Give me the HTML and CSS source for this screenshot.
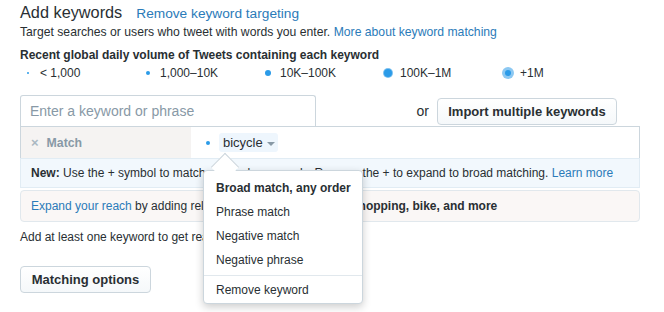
FILE: index.html
```html
<!DOCTYPE html>
<html>
<head>
<meta charset="utf-8">
<link rel="stylesheet" href="styles.css">
</head>
<body>
<div class="page">
  <div class="title-row">
    <h1 class="title">Add keywords</h1>
    <a class="link remove-link">Remove keyword targeting</a>
  </div>
  <p class="desc">Target searches or users who tweet with words you enter. <a class="link">More about keyword matching</a></p>
  <p class="vol-label">Recent global daily volume of Tweets containing each keyword</p>
  <div class="legend">
    <div class="legend-item"><span class="dotbox"><span class="dot d1"></span></span>&lt; 1,000</div>
    <div class="legend-item"><span class="dotbox"><span class="dot d2"></span></span>1,000–10K</div>
    <div class="legend-item"><span class="dotbox"><span class="dot d3"></span></span>10K–100K</div>
    <div class="legend-item"><span class="dotbox"><span class="dot d4"></span></span>100K–1M</div>
    <div class="legend-item"><span class="dotbox"><span class="dot d5"></span></span>+1M</div>
  </div>

  <div class="entry-row">
    <div class="input">Enter a keyword or phrase</div>
    <span class="or">or</span>
    <button class="btn import">Import multiple keywords</button>
  </div>

  <div class="kw-box">
    <div class="match-row">
      <div class="match-label"><span class="x">×</span><span>Match</span></div>
      <div class="match-body">
        <span class="dotbox small"><span class="dot d2"></span></span>
        <span class="chip">bicycle<span class="caret"></span></span>
      </div>
    </div>
    <div class="info"><b>New:</b> Use the + symbol to match exact phrases only. Remove the + to expand to broad matching. <a class="link">Learn more</a></div>

    <div class="menu">
      <div class="menu-arrow"></div>
      <div class="menu-item bold">Broad match, any order</div>
      <div class="menu-item">Phrase match</div>
      <div class="menu-item">Negative match</div>
      <div class="menu-item">Negative phrase</div>
      <div class="menu-sep"></div>
      <div class="menu-item">Remove keyword</div>
    </div>
  </div>

  <div class="expand"><a class="link">Expand your reach</a> by adding related keywords: <b>cycle, bike shopping, bike, and more</b></div>

  <p class="hint">Add at least one keyword to get reach estimates.</p>

  <button class="btn matching">Matching options</button>
</div>
</body>
</html>
```
FILE: styles.css
```css
* { box-sizing: border-box; }
html, body { margin: 0; padding: 0; background: #fff; }
body {
  font-family: "Liberation Sans", Arial, sans-serif;
  color: #292f33;
  font-size: 12px;
}
.page { width: 640px; min-height: 312px; padding: 0 0 0 20px; }
.link { color: #2b7bb9; text-decoration: none; }

.title-row { display: flex; align-items: baseline; gap: 14px; height: 23px; padding-top: 1px; }
.title { margin: 0; font-size: 16.3px; font-weight: normal; line-height: 22px; }
.remove-link { font-size: 13.7px; }

.desc { margin: 0; line-height: 18px; font-size: 12.2px; }
.vol-label { margin: 6px 0 0; font-weight: bold; line-height: 16px; font-size: 12px; }

.legend { display: flex; height: 20px; align-items: center; }
.legend-item { width: 120px; display: flex; align-items: center; gap: 4px; line-height: 16px; font-size: 12px; }
.dotbox { width: 16px; height: 16px; display: inline-flex; align-items: center; justify-content: center; }
.dot { display: block; border-radius: 50%; background: #2b9be8; }
.d1 { width: 2px; height: 2px; }
.d2 { width: 4px; height: 4px; }
.d3 { width: 6px; height: 6px; }
.d4 { width: 8px; height: 8px; box-shadow: 0 0 0 1px #7cc0ef; }
.d5 { width: 6px; height: 6px; box-shadow: 0 0 0 3px #8cc8f2; }

.entry-row { display: flex; align-items: center; margin-top: 12px; height: 31px; }
.input {
  width: 296px; height: 31px; border: 1px solid #ccd6dd; border-bottom: none;
  border-radius: 3px 3px 0 0; padding: 0 9px; line-height: 30px;
  font-size: 14px; color: #8899a6;
}
.or { margin-left: auto; margin-right: 8px; font-size: 14px; }
.btn {
  font-family: inherit; font-weight: bold; color: #292f33; white-space: nowrap;
  background: linear-gradient(#fff, #f5f8fa); border: 1px solid #ccd6dd;
  border-radius: 4px; font-size: 13px; padding: 0; height: 27px;
}
.import { width: 180px; margin-right: 23px; margin-top: 1px; }

.kw-box { position: relative; width: 620px; }
.match-row { display: flex; height: 32px; border: 1px solid #ccd6dd; border-bottom: none; }
.match-label {
  width: 170px; background: #f5f3f2; color: #8899a6; font-weight: bold;
  font-size: 12.3px; display: flex; align-items: center; padding-left: 10px; gap: 8px;
}
.x { font-size: 13px; color: #aab8c2; }
.match-body { display: flex; align-items: center; padding-left: 12px; }
.dotbox.small { width: 10px; }
.chip {
  margin-left: 6px; background: #eef6fd; border-radius: 3px; padding: 0 3px 0 4px;
  height: 19px; line-height: 19px; font-size: 13px; display: inline-flex; align-items: center;
}
.caret {
  display: inline-block; margin-left: 4px; margin-top: 2px; width: 0; height: 0;
  border-left: 4px solid transparent; border-right: 4px solid transparent; border-top: 4px solid #8899a6;
}
.info {
  height: 30px; background: #f2f8fd; border: 1px solid #e1ecf4;
  padding-left: 10px; line-height: 29px; font-size: 12px; white-space: nowrap; overflow: hidden;
}

.expand {
  margin-top: 2px; width: 620px; height: 32px; background: #faf7f6; border: 1px solid #e1e8ed;
  border-radius: 4px; padding-left: 10px; line-height: 30px; font-size: 12px; white-space: nowrap; overflow: hidden;
}
.hint { margin: 6px 0 0; line-height: 18px; font-size: 12px; }
.matching { margin-top: 20px; width: 131px; height: 27px; }

.menu {
  position: absolute; left: 183px; top: 44px; width: 160px; background: #fff;
  border: 1px solid #ccd6dd; border-radius: 4px; padding: 5px 0 1px;
  box-shadow: 0 3px 8px rgba(0,0,0,0.2); z-index: 2;
}
.menu-arrow {
  position: absolute; top: -14px; left: 11px; width: 20px; height: 20px; background: #fff;
  border-left: 1px solid #ccd6dd; border-top: 1px solid #ccd6dd; transform: rotate(45deg);
}
.menu-item { position: relative; padding: 0 12px; line-height: 24px; font-size: 12px; white-space: nowrap; }
.menu-item.bold { font-weight: bold; }
.menu-sep { height: 1px; background: #e1e8ed; margin: 3px 0 2px; }
```
